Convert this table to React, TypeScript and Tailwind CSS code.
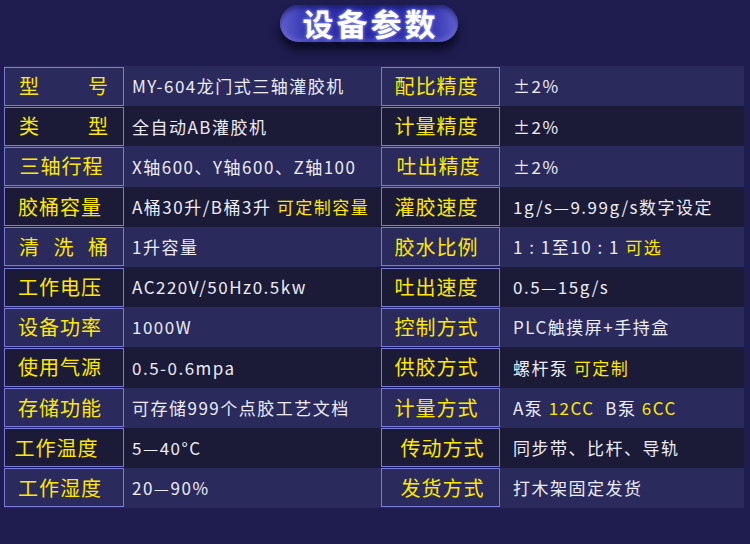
import React from "react";

type Seg = { t: string; y?: boolean };
type Row = { l: string; lc?: string; spread?: boolean; v: Seg[]; rl: string; rc?: string; rv: Seg[] };

const rows: Row[] = [
  { l: "型号", spread: true, v: [{ t: "MY-604龙门式三轴灌胶机" }], rl: "配比精度", rv: [{ t: "±2%" }] },
  { l: "类型", spread: true, v: [{ t: "全自动AB灌胶机" }], rl: "计量精度", rv: [{ t: "±2%" }] },
  { l: "三轴行程", lc: "pr-[5px]", v: [{ t: "X轴600、Y轴600、Z轴100" }], rl: "吐出精度", rc: "pr-[4px]", rv: [{ t: "±2%" }] },
  {
    l: "胶桶容量",
    v: [{ t: "A桶30升/B桶3升 " }, { t: "可定制容量", y: true }],
    rl: "灌胶速度",
    rv: [{ t: "1g/s—9.99g/s数字设定" }],
  },
  {
    l: "清洗桶",
    spread: true,
    v: [{ t: "1升容量" }],
    rl: "胶水比例",
    rv: [{ t: "1 : 1至10 : 1 " }, { t: "可选", y: true }],
  },
  { l: "工作电压", v: [{ t: "AC220V/50Hz0.5kw" }], rl: "吐出速度", rv: [{ t: "0.5—15g/s" }] },
  { l: "设备功率", v: [{ t: "1000W" }], rl: "控制方式", rv: [{ t: "PLC触摸屏+手持盒" }] },
  { l: "使用气源", v: [{ t: "0.5-0.6mpa" }], rl: "供胶方式", rv: [{ t: "螺杆泵 " }, { t: "可定制", y: true }] },
  {
    l: "存储功能",
    v: [{ t: "可存储999个点胶工艺文档" }],
    rl: "计量方式",
    rv: [{ t: "A泵 " }, { t: "12CC", y: true }, { t: "  B泵 " }, { t: "6CC", y: true }],
  },
  { l: "工作温度", lc: "pr-[15px]", v: [{ t: "5—40°C" }], rl: "传动方式", rc: "pl-[4px]", rv: [{ t: "同步带、比杆、导轨" }] },
  { l: "工作湿度", v: [{ t: "20—90%" }], rl: "发货方式", rc: "pl-[4px]", rv: [{ t: "打木架固定发货" }] },
];

const font = { fontFamily: '"Noto Sans CJK SC", "Noto Sans", sans-serif' };

function Label({ text, spread, cls }: { text: string; spread?: boolean; cls?: string }) {
  return (
    <div
      className={
        "flex h-[39px] items-center border border-[#7a7ad8] text-[20px] tracking-[1px] text-[#ffe800] " +
        (spread ? "justify-between px-[14px]" : "justify-center " + (cls ?? "pr-[8px]"))
      }
    >
      {spread ? text.split("").map((c, i) => <span key={i}>{c}</span>) : <span>{text}</span>}
    </div>
  );
}

function Value({ segs }: { segs: Seg[] }) {
  return (
    <div className="flex items-center whitespace-pre text-[17px] tracking-[1.5px] text-[#ececf4]">
      {segs.map((s, i) => (
        <span key={i} className={s.y ? "text-[#ffe800]" : ""}>
          {s.t}
        </span>
      ))}
    </div>
  );
}

export default function App() {
  return (
    <div className="h-[544px] w-[750px] overflow-hidden bg-[#1f1d4f]" style={font}>
      <div className="flex pl-[280px] pt-[5px]">
        <div className="flex h-[37px] w-[178px] items-center justify-center rounded-full bg-[linear-gradient(90deg,#6060d2_0%,#3232ac_16%,#2828a0_50%,#3232ac_84%,#6060d2_100%)] shadow-[0_8px_10px_rgba(5,5,25,0.8),inset_0_3px_4px_rgba(20,20,80,0.6),inset_0_-3px_5px_rgba(140,140,240,0.35)]">
          <span className="pl-[3px] text-[31px] font-bold tracking-[3px] text-white [text-shadow:0_0_3px_#9fa8ff,0_0_6px_#4c56d8]">
            设备参数
          </span>
        </div>
      </div>
      <div className="mx-[4px] mt-[24px] flex w-[740px] flex-col">
        {rows.map((r, i) => (
          <div
            key={i}
            className={
              "grid h-[40.2px] grid-cols-[120px_257px_119px_244px] items-center " +
              (i % 2 === 0 ? "bg-[#2a2a5c]" : "bg-[#1b1a37]")
            }
          >
            <Label text={r.l} spread={r.spread} cls={r.lc} />
            <div className="pl-[8px]">
              <Value segs={r.v} />
            </div>
            <Label text={r.rl} cls={r.rc} />
            <div className="pl-[13px]">
              <Value segs={r.rv} />
            </div>
          </div>
        ))}
      </div>
    </div>
  );
}
